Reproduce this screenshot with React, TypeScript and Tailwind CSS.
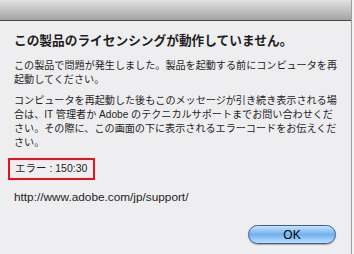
import React from 'react';

const FONT = "'Liberation Sans', 'Noto Sans CJK JP', sans-serif";

const App: React.FC = () => {
  return (
    <div className="w-[354px] h-[254px] flex bg-[#f4f4f5] overflow-hidden" style={{ fontFamily: FONT }}>
      {/* Dialog window */}
      <div className="w-[352px] h-full flex flex-col bg-[#eeeef0] border-r border-[#9c9c9c]">
        {/* Title bar */}
        <div className="h-[21px] shrink-0 bg-gradient-to-b from-[#e2e2e2] to-[#a4a4a4] border-b border-[#4a4a4a]" />

        {/* Body */}
        <div className="flex flex-col pl-[14px] pt-[12px] text-[#1e1e1e]">
          <h1 className="text-[12.7px] leading-[16px] font-bold whitespace-nowrap">
            この製品のライセンシングが動作していません。
          </h1>

          <p className="mt-[10px] text-[10.1px] leading-[14px] whitespace-nowrap">
            この製品で問題が発生しました。製品を起動する前にコンピュータを再
            <br />
            起動してください。
          </p>

          <p className="mt-[7px] text-[10.1px] leading-[14px] whitespace-nowrap">
            コンピュータを再起動した後もこのメッセージが引き続き表示される場
            <br />
            合は、IT 管理者か Adobe のテクニカルサポートまでお問い合わせくだ
            <br />
            さい。その際に、この画面の下に表示されるエラーコードをお伝えくだ
            <br />
            さい。
          </p>

          <div className="mt-[8px] -ml-[6px] w-[87px] h-[22px] flex items-center pl-[5px] border-2 border-[#e8101a] text-[10.5px] whitespace-nowrap">
            エラー : 150:30
          </div>

          <p className="mt-[10px] text-[11.8px] leading-[14px] whitespace-nowrap">
            http://www.adobe.com/jp/support/
          </p>

          <div className="flex justify-end pr-[15px] mt-[21px]">
            <button
              className="w-[88px] h-[19px] rounded-full border border-[#3a5f9a] flex items-center justify-center text-[12px] text-black bg-gradient-to-b from-[#c9e2fb] via-[#6fb0ef] to-[#b9e0fb] shadow-[0_1px_1px_rgba(0,0,0,0.3)]"
              style={{ fontFamily: FONT }}
            >
              OK
            </button>
          </div>
        </div>
      </div>
    </div>
  );
};

export default App;
